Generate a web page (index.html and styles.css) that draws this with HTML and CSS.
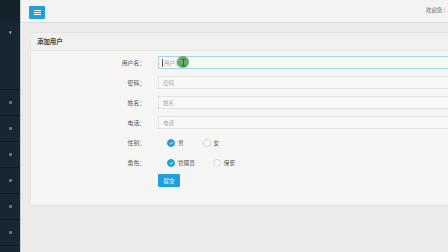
FILE: index.html
```html
<!DOCTYPE html>
<html lang="zh">
<head>
<meta charset="utf-8">
<title>添加用户</title>
<link rel="stylesheet" href="styles.css">
</head>
<body>
<aside class="sidebar">
  <div class="side-top"></div>
  <div class="side-user"><span class="caret">▾</span></div>
  <ul class="side-menu">
    <li><span class="mi"></span></li>
    <li><span class="mi"></span></li>
    <li><span class="mi"></span></li>
    <li><span class="mi"></span></li>
    <li><span class="mi"></span></li>
    <li><span class="mi"></span></li>
    <li><span class="mi"></span></li>
  </ul>
</aside>
<div class="main">
  <header class="topbar">
    <button class="menu-btn" type="button" aria-label="menu">
      <svg width="7" height="5" viewBox="0 0 7 5"><path d="M0 0.5H7M0 2.5H7M0 4.5H7" stroke="#fff" stroke-width="1"/></svg>
    </button>
    <span class="welcome">欢迎您 :</span>
  </header>
  <div class="content">
    <section class="card">
      <div class="card-head">添加用户</div>
      <form class="card-body">
        <div class="row">
          <label class="lbl">用户名：</label>
          <div class="field focus"><span class="caret-line"></span><span class="ph">用户名</span></div>
          <span class="click-dot"><svg width="5" height="7" viewBox="0 0 5 7"><path d="M0.5 0.5H4.5M2.5 0.5V6.5M0.5 6.5H4.5" stroke="#2c3a20" stroke-width="0.8" fill="none"/></svg></span>
        </div>
        <div class="row">
          <label class="lbl">密码：</label>
          <div class="field"><span class="ph">密码</span></div>
        </div>
        <div class="row">
          <label class="lbl">姓名：</label>
          <div class="field"><span class="ph">姓名</span></div>
        </div>
        <div class="row">
          <label class="lbl">电话：</label>
          <div class="field"><span class="ph">电话</span></div>
        </div>
        <div class="row radio-row">
          <label class="lbl">性别：</label>
          <div class="opts">
            <span class="opt"><span class="radio on"><svg width="5" height="4" viewBox="0 0 5 4"><path d="M0.6 2L2 3.3L4.4 0.8" stroke="#fff" stroke-width="0.8" fill="none"/></svg></span>男</span>
            <span class="opt gap1"><span class="radio"></span>女</span>
          </div>
        </div>
        <div class="row radio-row">
          <label class="lbl">角色：</label>
          <div class="opts">
            <span class="opt"><span class="radio on"><svg width="5" height="4" viewBox="0 0 5 4"><path d="M0.6 2L2 3.3L4.4 0.8" stroke="#fff" stroke-width="0.8" fill="none"/></svg></span>管理员</span>
            <span class="opt gap2"><span class="radio"></span>保安</span>
          </div>
        </div>
        <div class="row btn-row">
          <span class="lbl"></span>
          <button class="submit" type="button">提交</button>
        </div>
      </form>
    </section>
  </div>
</div>
</body>
</html>
```
FILE: styles.css
```css
* { box-sizing: border-box; margin: 0; padding: 0; }
html, body { width: 448px; height: 252px; overflow: hidden; }
body {
  display: flex;
  font-family: "Noto Sans CJK SC", "Noto Sans", sans-serif;
  background: #ebebe9;
  color: #555;
}
.sidebar {
  width: 21px;
  flex: none;
  background: #172731;
  border-right: 1px solid #c9cdcf;
  display: flex;
  flex-direction: column;
  overflow: hidden;
}
.side-top { height: 22px; flex: none; background: #14222b; }
.side-user {
  height: 67px;
  flex: none;
}
.caret {
  display: block;
  text-align: center;
  font-size: 5px;
  line-height: 5px;
  color: #c9d0d4;
  padding-top: 7px;
}
.side-menu { list-style: none; flex: none; }
.side-menu li {
  height: 26px;
  border-top: 1px solid #0f1c23;
  display: flex;
  align-items: center;
  justify-content: center;
}
.mi {
  width: 3px; height: 3px;
  background: #6d7a82;
  border-radius: 1px;
}
.main {
  flex: 1;
  display: flex;
  flex-direction: column;
  min-width: 0;
}
.topbar {
  height: 23px;
  flex: none;
  background: #f3f4f2;
  border-bottom: 1px solid #dcdedc;
  display: flex;
  align-items: center;
  justify-content: space-between;
  padding: 0 3px 0 8px;
}
.menu-btn {
  width: 16px; height: 13px;
  border: none;
  border-radius: 1px;
  background: #1fa0dc;
  display: flex;
  align-items: center;
  justify-content: center;
  margin-top: 2px;
}
.welcome {
  font-size: 5.5px;
  color: #666;
  white-space: nowrap;
  margin-top: -2px;
}
.content {
  padding: 9px 0 0 9px;
  overflow: hidden;
}
.card {
  width: 440px;
  background: #f5f6f3;
  border: 1px solid #e2e5e3;
  border-right: none;
  box-shadow: 0 1px 0 #dde5e6;
}
.card-head {
  height: 18px;
  padding-left: 6px;
  display: flex;
  align-items: center;
  font-size: 6.4px;
  font-weight: bold;
  color: #444;
  background: #f1f2f0;
  border-bottom: 1px solid #e6e8e6;
}
.card-body {
  padding: 5px 0 18px 0;
  display: flex;
  flex-direction: column;
  gap: 7px;
}
.row {
  display: flex;
  align-items: center;
  gap: 13px;
  position: relative;
}
.lbl {
  width: 114px;
  flex: none;
  text-align: right;
  font-size: 5.8px;
  color: #555;
}
.field {
  flex: 1;
  height: 13px;
  background: #f8f9f7;
  border: 1px solid #dfe3e3;
  border-right: none;
  display: flex;
  align-items: center;
  padding-left: 3px;
}
.field.focus { border-color: #a9d5e6; }
.caret-line {
  width: 1px; height: 8px;
  background: #555;
}
.ph {
  font-size: 5.6px;
  color: #aaa;
  padding-left: 1px;
}
.click-dot {
  position: absolute;
  left: 146px;
  top: 0;
  width: 12px;
  height: 12px;
  border-radius: 50%;
  background: #58a35a;
  opacity: 0.9;
  display: flex;
  align-items: center;
  justify-content: center;
}
.radio-row { height: 13px; }
.opts { display: flex; align-items: center; margin-left: 9px; }
.opt {
  display: flex;
  align-items: center;
  gap: 3px;
  font-size: 5.6px;
  color: #555;
}
.gap1 { margin-left: 19px; }
.gap2 { margin-left: 18px; }
.radio {
  width: 8px; height: 8px;
  border-radius: 50%;
  border: 1px solid #d3d6d6;
  background: #fafafa;
  display: flex;
  align-items: center;
  justify-content: center;
}
.radio.on { background: #1d9fdb; border-color: #1d9fdb; }
.btn-row { margin-top: -2px; }
.submit {
  width: 22px; height: 13px;
  border: none;
  border-radius: 1px;
  background: #1fa0dc;
  color: #fff;
  font-family: "Noto Sans CJK SC", sans-serif;
  font-size: 5.6px;
}
```
